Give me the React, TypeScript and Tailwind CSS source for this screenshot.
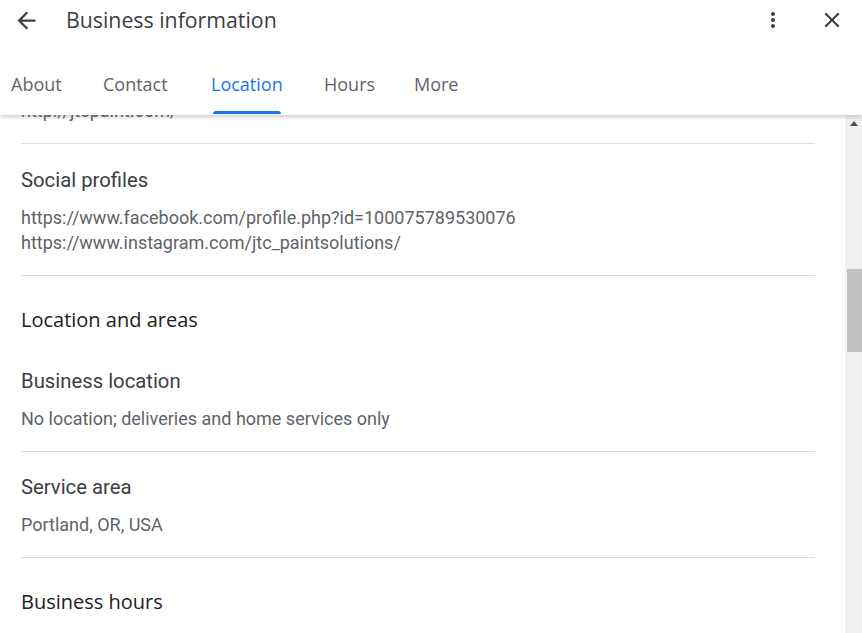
import React from "react";

const heading = { fontFamily: '"Open Sans", Roboto, sans-serif' };

function Divider() {
  return <div className="h-px bg-[#dadce0]" />;
}

const tabs = [
  { t: "About", w: "w-[92px]" },
  { t: "Contact", w: "w-[108px]" },
  { t: "Location", w: "w-[113px]" },
  { t: "Hours", w: "w-[90px]" },
  { t: "More", w: "w-[60px]" },
];

export default function App() {
  return (
    <div className="w-[862px] h-[633px] bg-white flex flex-col overflow-hidden" style={{ fontFamily: "Roboto, sans-serif" }}>
      <header className="relative z-10 h-[115px] shrink-0 bg-white shadow-[0_2px_4px_rgba(60,64,67,0.25)] flex flex-col">
        <div className="h-10 flex items-center">
          <div className="pl-[13px] w-[66px] flex items-center">
            <svg width="27" height="27" viewBox="0 0 24 24" fill="#3c4043">
              <path d="M20 11H7.83l5.59-5.59L12 4l-8 8 8 8 1.41-1.41L7.83 13H20v-2z" />
            </svg>
          </div>
          <div className="text-[21.3px] text-[#3c4043] leading-none" style={heading}>Business information</div>
          <div className="ml-auto flex items-center">
            <div className="mr-[34px] flex items-center">
              <svg width="24" height="24" viewBox="0 0 24 24" fill="#3c4043">
                <path d="M12 8c1.1 0 2-.9 2-2s-.9-2-2-2-2 .9-2 2 .9 2 2 2zm0 2c-1.1 0-2 .9-2 2s.9 2 2 2 2-.9 2-2-.9-2-2-2zm0 6c-1.1 0-2 .9-2 2s.9 2 2 2 2-.9 2-2-.9-2-2-2z" />
              </svg>
            </div>
            <div className="mr-[17px] flex items-center">
              <svg width="26" height="26" viewBox="0 0 24 24" fill="#3c4043">
                <path d="M19 6.41L17.59 5 12 10.59 6.41 5 5 6.41 10.59 12 5 17.59 6.41 19 12 13.41 17.59 19 19 17.59 13.41 12z" />
              </svg>
            </div>
          </div>
        </div>
        <nav className="flex-1 flex pl-[11px]">
          {tabs.map(({ t, w }) => {
            const active = t === "Location";
            return (
              <div key={t} className={`relative h-full flex items-center pt-[12px] ${w}`}>
                <span
                  className={`text-[18px] leading-none whitespace-nowrap ${active ? "text-[#1a73e8]" : "text-[#5f6368]"}`}
                  style={{ ...heading, fontWeight: 500 }}
                >
                  {t}
                </span>
                {active && (
                  <div className="absolute left-[2px] w-[68px] bottom-px h-[3px] rounded-t-[3px] bg-[#1a73e8]" />
                )}
              </div>
            );
          })}
        </nav>
      </header>
      <div className="flex-1 flex min-h-0">
        <main className="flex-1 overflow-hidden pl-[21px] pr-[30px]">
          <div className="-mt-[17px]">
            <div className="text-[18px] leading-[25px] text-[#5f6368]">http://jtcpaint.com/</div>
            <div className="mt-[20px]"><Divider /></div>
            <div className="pt-[22px] text-[20.3px] leading-[28px] text-[#3c4043]">Social profiles</div>
            <div className="mt-[11px] text-[18px] leading-[25px] text-[#5f6368]">
              <div>https://www.facebook.com/profile.php?id=100075789530076</div>
              <div>https://www.instagram.com/jtc_paintsolutions/</div>
            </div>
            <div className="mt-[20px]"><Divider /></div>
            <div className="pt-[32px] text-[20px] leading-[24px] text-[#202124]" style={heading}>Location and areas</div>
            <div className="mt-[35px] text-[20.3px] leading-[28px] text-[#3c4043]">Business location</div>
            <div className="mt-[11px] text-[18px] leading-[25px] text-[#5f6368]">No location; deliveries and home services only</div>
            <div className="mt-[20px]"><Divider /></div>
            <div className="pt-[21px] text-[20.3px] leading-[28px] text-[#3c4043]">Service area</div>
            <div className="mt-[11px] text-[18px] leading-[25px] text-[#5f6368]">Portland, OR, USA</div>
            <div className="mt-[20px]"><Divider /></div>
            <div className="pt-[32px] text-[20px] leading-[24px] text-[#202124]" style={heading}>Business hours</div>
          </div>
        </main>
        <div className="w-[17px] shrink-0 bg-[#f1f1f1] flex flex-col">
          <div className="h-[17px] flex items-center justify-center">
            <div className="w-0 h-0 border-l-[4px] border-r-[4px] border-b-[5px] border-l-transparent border-r-transparent border-b-[#505050]" />
          </div>
          <div className="mt-[137px] ml-[2px] h-[83px] bg-[#c1c1c1]" />
        </div>
      </div>
    </div>
  );
}
